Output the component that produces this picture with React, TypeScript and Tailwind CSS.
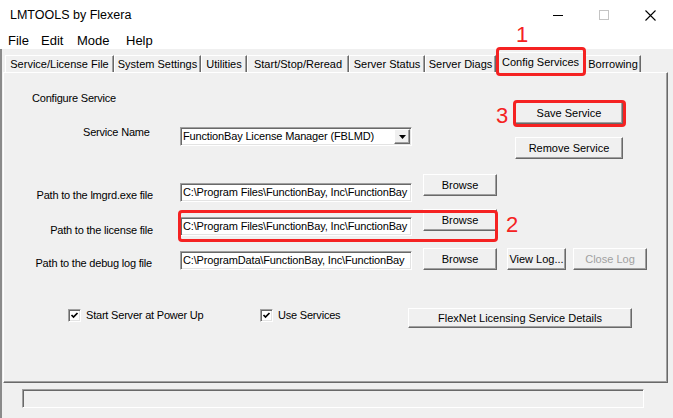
import React from "react";

const raised =
  "flex items-center justify-center bg-[#f0f0f0] border border-t-white border-l-white border-r-[#696969] border-b-[#696969] shadow-[inset_-1px_-1px_0_#a0a0a0] text-[11px] leading-[13px] whitespace-nowrap";
const sunken =
  "bg-white border border-t-[#a0a0a0] border-l-[#a0a0a0] border-r-white border-b-white shadow-[inset_1px_1px_0_#696969,inset_-1px_-1px_0_#e3e3e3]";
const label = "text-[11px] leading-[13px] whitespace-nowrap tracking-[-0.2px]";

function Btn({
  children,
  className = "",
  disabled = false,
}: {
  children: React.ReactNode;
  className?: string;
  disabled?: boolean;
}) {
  return (
    <div className={`${raised} ${disabled ? "text-[#a0a0a0]" : "text-black"} ${className}`}>
      {children}
    </div>
  );
}

function Field({ value, className = "" }: { value: string; className?: string }) {
  return (
    <div
      className={`${sunken} w-[232px] h-[19px] flex items-center pl-[2px] overflow-hidden whitespace-nowrap text-[11px] leading-[13px] tracking-[-0.15px] ${className}`}
    >
      {value}
    </div>
  );
}

function Check({ text }: { text: string }) {
  return (
    <div className="flex items-start">
      <div className={`${sunken} w-[13px] h-[13px] mt-[1px] flex items-center justify-center`}>
        <svg width="9" height="9" viewBox="0 0 9 9">
          <path d="M1.5 4 L3.5 6 L7.5 2" fill="none" stroke="#000" strokeWidth="1.7" />
        </svg>
      </div>
      <span className={`ml-[5px] mt-[1px] ${label}`}>{text}</span>
    </div>
  );
}

const tabs = [
  { label: "Service/License File", w: "w-[109px]" },
  { label: "System Settings", w: "w-[87px]" },
  { label: "Utilities", w: "w-[46px]" },
  { label: "Start/Stop/Reread", w: "w-[102px]" },
  { label: "Server Status", w: "w-[76px]" },
  { label: "Server Diags", w: "w-[71px]" },
  { label: "Config Services", w: "w-[89px]", active: true },
  { label: "Borrowing", w: "w-[56px]" },
];

export default function App() {
  return (
    <div className="relative w-[673px] h-[418px] overflow-hidden bg-white font-['Liberation_Sans',Arial,sans-serif] text-black">
      {/* title bar */}
      <div className="h-[30px] flex items-center">
        <span className="pl-[10px] text-[12.5px]">LMTOOLS by Flexera</span>
        <div className="ml-auto flex">
          <div className="w-[46px] h-[30px] flex items-center justify-center">
            <svg width="10" height="10" viewBox="0 0 10 10">
              <path d="M0 5.5 H10" stroke="#000" strokeWidth="1" />
            </svg>
          </div>
          <div className="w-[46px] h-[30px] flex items-center justify-center">
            <svg width="10" height="10" viewBox="0 0 10 10">
              <rect x="0.5" y="0.5" width="9" height="9" fill="none" stroke="#c4c4c4" strokeWidth="1" />
            </svg>
          </div>
          <div className="w-[46px] h-[30px] flex items-center justify-center">
            <svg width="11" height="11" viewBox="0 0 11 11">
              <path d="M0.5 0.5 L10.5 10.5 M10.5 0.5 L0.5 10.5" stroke="#000" strokeWidth="1.1" />
            </svg>
          </div>
        </div>
      </div>

      {/* menu bar */}
      <div className="h-[19px] flex items-center pt-[2px] pl-[8px] text-[13px]">
        <span className="w-[33px]">File</span>
        <span className="w-[36px]">Edit</span>
        <span className="w-[49px]">Mode</span>
        <span>Help</span>
      </div>

      <div className="h-[369px] bg-[#f0f0f0] border-l-2 border-l-[#8a8a8a]">
        {/* tabs */}
        <div className="h-[23px] flex items-end pl-[3px]">
          {tabs.map((t) =>
            t.active ? (
              <div
                key={t.label}
                className={`${t.w} relative z-10 -mb-px h-[21px] bg-[#f0f0f0] flex items-center justify-center pb-[2px] border-t border-l border-r border-t-white border-l-white border-r-[#696969] shadow-[inset_-1px_0_0_#a0a0a0] text-[11px] whitespace-nowrap`}
              >
                {t.label}
              </div>
            ) : (
              <div
                key={t.label}
                className={`${t.w} h-[17px] flex items-center justify-center pt-[1px] border-t border-l border-r border-t-white border-l-white border-r-[#696969] shadow-[inset_-1px_0_0_#a0a0a0] text-[11px] whitespace-nowrap`}
              >
                {t.label}
              </div>
            )
          )}
        </div>

        {/* tab panel */}
        <div className="ml-[1px] w-[665px] h-[311px] border border-t-white border-l-white border-r-[#696969] border-b-[#696969] shadow-[inset_-1px_-1px_0_#a0a0a0]">
          <div className="flex h-[101px]">
            <div className="w-[408px] pt-[19px]">
              <div className={`pl-[28px] ${label}`}>Configure Service</div>
              <div className="mt-[21px] flex items-start">
                <div className={`w-[149px] pl-[79px] ${label}`}>Service Name</div>
                <div className={`${sunken} ml-[27px] mt-[1px] w-[232px] h-[19px] flex items-center pl-[2px] pr-[1px] text-[11px] tracking-[-0.15px]`}>
                  <span className="flex-1 whitespace-nowrap overflow-hidden">FunctionBay License Manager (FBLMD)</span>
                  <div className={`${raised} w-[16px] h-[15px]`}>
                    <svg width="7" height="4" viewBox="0 0 7 4">
                      <path d="M0 0 H7 L3.5 4 Z" fill="#000" />
                    </svg>
                  </div>
                </div>
              </div>
            </div>
            <div className="ml-[103px] pt-[29px] flex flex-col">
              <Btn className="w-[108px] h-[22px]">Save Service</Btn>
              <Btn className="mt-[13px] w-[108px] h-[22px]">Remove Service</Btn>
            </div>
          </div>

          {/* path rows */}
          <div className="h-[35px] flex items-start">
            <div className={`w-[149px] mt-[15px] text-right ${label}`}>Path to the lmgrd.exe file</div>
            <Field className="ml-[27px] mt-[9px]" value="C:\Program Files\FunctionBay, Inc\FunctionBay" />
            <Btn className="ml-[11px] w-[74px] h-[22px]">Browse</Btn>
          </div>
          <div className="h-[39px] flex items-start">
            <div className={`w-[149px] mt-[15px] text-right ${label}`}>Path to the license file</div>
            <Field className="ml-[27px] mt-[8px]" value="C:\Program Files\FunctionBay, Inc\FunctionBay" />
            <Btn className="ml-[11px] w-[74px] h-[22px]">Browse</Btn>
          </div>
          <div className="h-[22px] flex items-start">
            <div className={`w-[148px] mt-[9px] text-right ${label}`}>Path to the debug log file</div>
            <Field className="ml-[28px] mt-[3px]" value="C:\ProgramData\FunctionBay, Inc\FunctionBay" />
            <Btn className="ml-[11px] w-[74px] h-[22px]">Browse</Btn>
            <Btn className="ml-[10px] w-[59px] h-[22px]">View Log...</Btn>
            <Btn className="ml-[7px] w-[74px] h-[22px]" disabled>
              Close Log
            </Btn>
          </div>

          {/* options row */}
          <div className="mt-[38px] ml-[64px] flex items-start">
            <div className="w-[192px]">
              <Check text="Start Server at Power Up" />
            </div>
            <div className="w-[148px]">
              <Check text="Use Services" />
            </div>
            <Btn className="w-[224px] h-[20px]">FlexNet Licensing Service Details</Btn>
          </div>
        </div>

        {/* status bar */}
        <div className="mt-[6px] ml-[20px] w-[622px] h-[19px] border border-t-[#a0a0a0] border-l-[#a0a0a0] border-r-white border-b-white shadow-[inset_1px_1px_0_#696969]" />
      </div>

      {/* red annotations */}
      <div className="absolute left-[496px] top-[47px] w-[90px] h-[29px] border-[3px] border-[#f52222] rounded-[4px] z-20" />
      <div className="absolute left-[178px] top-[210px] w-[320px] h-[32px] border-[3px] border-[#f52222] rounded-[4px] z-20" />
      <div className="absolute left-[513px] top-[100px] w-[113px] h-[27px] border-[3px] border-[#f52222] rounded-[4px] z-20" />
      <span className="absolute left-[516px] top-[24px] text-[22px] leading-[22px] text-[#f52222]">1</span>
      <span className="absolute left-[506px] top-[214px] text-[22px] leading-[22px] text-[#f52222]">2</span>
      <span className="absolute left-[496px] top-[105px] text-[22px] leading-[22px] text-[#f52222]">3</span>
    </div>
  );
}
